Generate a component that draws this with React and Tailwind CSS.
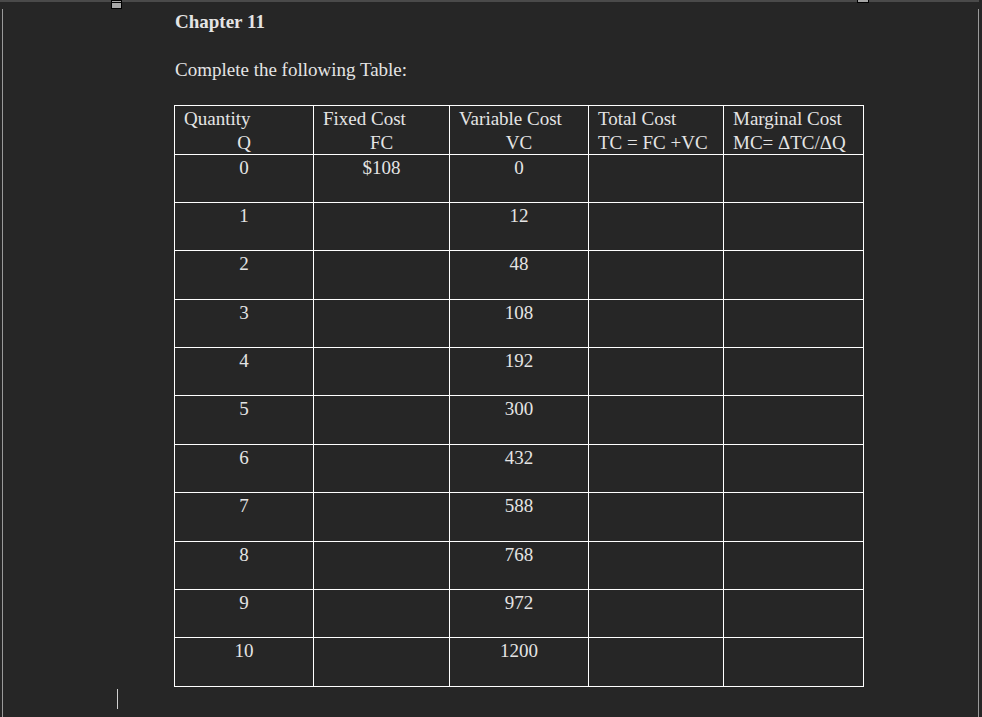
import React from "react";

const rows = [
  ["0", "$108", "0"],
  ["1", "", "12"],
  ["2", "", "48"],
  ["3", "", "108"],
  ["4", "", "192"],
  ["5", "", "300"],
  ["6", "", "432"],
  ["7", "", "588"],
  ["8", "", "768"],
  ["9", "", "972"],
  ["10", "", "1200"],
];

const rowH = [48, 48, 49, 48, 48, 49, 48, 49, 48, 48, 49];

export default function App() {
  return (
    <div
      className="relative w-[982px] h-[717px] overflow-hidden bg-[#262626] text-[#e4e4e4]"
      style={{ fontFamily: '"Liberation Serif", "Times New Roman", serif' }}
    >
      {/* top ruler line */}
      <div className="absolute left-0 top-0 w-[979px] h-[2px] bg-[#4a4a4a]" />
      <div className="absolute left-[111px] top-0 w-[11px] h-[9px] border border-black bg-[#a6a6a6] flex flex-col">
        <div className="h-[2px] border-b border-black bg-[#a6a6a6]" />
      </div>
      <div className="absolute left-[857px] top-0 w-[12px] h-[3px] border border-black border-t-0 bg-[#a6a6a6]" />
      {/* page side lines */}
      <div className="absolute left-[2px] top-[9px] w-px h-[708px] bg-[#9a9a9a]" />
      <div className="absolute left-[978px] top-[9px] w-px h-[708px] bg-[#9a9a9a]" />
      {/* cursor */}
      <div className="absolute left-[117px] top-[689px] w-px h-[20px] bg-[#d0d0d0]" />

      <div className="pl-[175px] pt-[10px] text-[19px] leading-[24px]">
        <div className="font-bold h-[24px]">Chapter 11</div>
        <div className="mt-[24px] h-[24px]">Complete the following Table:</div>
        <table className="mt-[23px] -ml-px border-collapse">
          <tbody>
            <tr className="h-[49px]">
              <td className="w-[139px] border border-white align-top pt-px px-[9px] leading-[23.5px]">
                <div>Quantity</div>
                <div className="text-center">Q</div>
              </td>
              <td className="w-[136px] border border-white align-top pt-px px-[9px] leading-[23.5px]">
                <div>Fixed Cost</div>
                <div className="text-center">FC</div>
              </td>
              <td className="w-[139px] border border-white align-top pt-px px-[9px] leading-[23.5px]">
                <div>Variable Cost</div>
                <div className="text-center">VC</div>
              </td>
              <td className="w-[135px] border border-white align-top pt-px px-[9px] leading-[23.5px] whitespace-nowrap">
                <div>Total Cost</div>
                <div>TC = FC +VC</div>
              </td>
              <td className="w-[140px] border border-white align-top pt-px px-[9px] leading-[23.5px] whitespace-nowrap">
                <div>Marginal Cost</div>
                <div>MC= ΔTC/ΔQ</div>
              </td>
            </tr>
            {rows.map((r, i) => (
              <tr key={i} style={{ height: rowH[i] }}>
                <td className="border border-white align-top pt-px text-center">{r[0]}</td>
                <td className="border border-white align-top pt-px text-center">{r[1]}</td>
                <td className="border border-white align-top pt-px text-center">{r[2]}</td>
                <td className="border border-white align-top pt-px"></td>
                <td className="border border-white align-top pt-px"></td>
              </tr>
            ))}
          </tbody>
        </table>
      </div>
    </div>
  );
}
